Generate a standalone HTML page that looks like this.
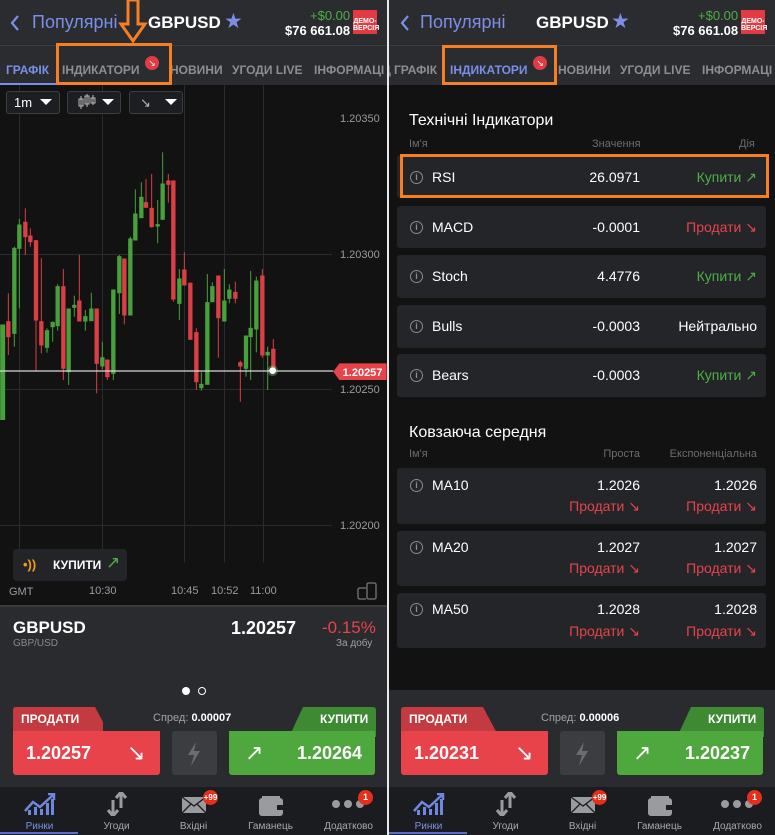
<!DOCTYPE html>
<html><head><meta charset="utf-8">
<style>
*{margin:0;padding:0;box-sizing:border-box}
body{width:775px;height:835px;background:#fff;font-family:"Liberation Sans",Arial,sans-serif;position:relative;overflow:hidden}
.p{position:absolute;top:0;height:835px;overflow:hidden;background:#121212}
.a{position:absolute;white-space:nowrap}
.hdr{position:absolute;left:0;top:0;width:100%;height:45px;background:#2b2c30}
.tabs{position:absolute;left:0;top:45px;width:100%;height:40px;background:#2b2c30;border-top:1px solid #3a3b3f}
.tab{position:absolute;top:17px;font-size:12px;font-weight:bold;color:#8d8e92}
.orange{position:absolute;border:3px solid #f47f24}
.badge{position:absolute;width:14px;height:14px;border-radius:50%;background:#e23b43;color:#fff;font-size:9px;line-height:14px;text-align:center}
.demo{position:absolute;width:24px;height:24px;background:#e23b43;color:#fff;font-size:7px;font-weight:bold;text-align:center;line-height:7px;padding-top:8px}
.row{position:absolute;left:8px;width:369px;background:#242529;border-radius:3px}
.info{position:absolute;width:13px;height:13px;border:1.5px solid #8a8b8f;border-radius:50%;color:#8a8b8f;font-size:9px;line-height:10px;text-align:center;font-weight:bold}
.w{color:#fff;font-size:14px}
.g{color:#4caf43;font-size:14px}
.r{color:#e8434a;font-size:14px}
.sm{color:#6b6c70;font-size:11px}
.bot{position:absolute;left:0;top:605px;width:100%;height:182px;background:#2a2b2f}
.nav{position:absolute;left:0;top:787px;width:100%;height:48px;background:#1b1c1f}
.navl{position:absolute;top:34px;font-size:10px;color:#a8a9ad;text-align:center;width:77px}
.ttl{position:absolute;top:13px;font-size:17px;color:#fff;font-weight:bold}
</style></head><body>

<!-- LEFT PANEL -->
<div class="p" style="left:0;width:387px">
 <div class="hdr">
  <svg class="a" style="left:9px;top:14px" width="12" height="18"><path d="M9 2 L3 9 L9 16" stroke="#7b8fe8" stroke-width="2.2" fill="none"/></svg>
  <div class="a" style="left:32px;top:12px;font-size:18px;color:#7b8fe8">Популярні</div>
  <div class="ttl" style="left:148px">GBPUSD</div>
  <div class="a" style="left:224px;top:9px;font-size:21px;color:#7b8fe8">★</div>
  <div class="a" style="left:310px;top:8px;font-size:13px;color:#4caf43">+$0.00</div>
  <div class="a" style="left:285px;top:23px;font-size:13px;color:#fff;font-weight:bold">$76 661.08</div>
  <div class="demo" style="left:353px;top:10px">ДЕМО-<br>ВЕРСІЯ</div>
 </div>
 <div class="tabs">
  <div class="tab" style="left:6px;color:#7b8fe8">ГРАФІК</div>
  <div class="tab" style="left:62px">ІНДИКАТОРИ</div>
  <div class="tab" style="left:170px">НОВИНИ</div>
  <div class="tab" style="left:232px">УГОДИ LIVE</div>
  <div class="tab" style="left:314px">ІНФОРМАЦІ</div>
  <div class="a" style="left:0;top:37px;width:57px;height:2px;background:#7b8fe8"></div>
  <div class="badge" style="left:145px;top:10px">↘</div>
 </div>
 <div class="orange" style="left:56px;top:43px;width:116px;height:42px"></div>
 <svg class="a" style="left:118px;top:0" width="30" height="44"><path d="M10 0 V24 H3 L15 41 L27 24 H20 V0 Z" fill="none" stroke="#f47f24" stroke-width="3"/></svg>

 <!-- chart -->
 <svg class="a" style="left:0;top:85px" width="387" height="520">
  <rect width="387" height="520" fill="#121212"/>
  <g stroke="#2a2b2e" stroke-width="1">
   <line x1="19.5" y1="0" x2="19.5" y2="480"/><line x1="102.5" y1="0" x2="102.5" y2="480"/>
   <line x1="184.5" y1="0" x2="184.5" y2="478"/><line x1="224.5" y1="0" x2="224.5" y2="478"/>
   <line x1="263.5" y1="0" x2="263.5" y2="478"/>
   <line x1="0" y1="169.5" x2="332" y2="169.5"/><line x1="0" y1="304.5" x2="332" y2="304.5"/><line x1="0" y1="440.5" x2="332" y2="440.5"/>
  </g>
  <g fill="#9a9b9f" font-size="11" font-family="Liberation Sans">
   <text x="340" y="37">1.20350</text><text x="340" y="173">1.20300</text>
   <text x="340" y="308">1.20250</text><text x="340" y="444">1.20200</text>
   <text x="9" y="510">GMT</text><text x="89" y="509">10:30</text><text x="171" y="509">10:45</text>
   <text x="211" y="509">10:52</text><text x="250" y="509">11:00</text>
  </g>
 </svg>
 <svg class="a" style="left:0;top:120px" width="390" height="300" viewBox="0 0 1170 900">
 <g stroke-width="3">
 <g stroke="#46a03c" fill="#46a03c">
  <line x1="8" y1="615" x2="8" y2="900"/><rect x="2" y="615" width="12" height="285"/>
  <line x1="43" y1="380" x2="43" y2="680"/><rect x="38" y="385" width="10" height="255"/>
  <line x1="58" y1="297" x2="58" y2="565"/><rect x="53" y="315" width="10" height="70"/>
  <line x1="141" y1="625" x2="141" y2="698"/><rect x="136" y="632" width="10" height="50"/>
  <line x1="158" y1="605" x2="158" y2="665"/><rect x="153" y="607" width="10" height="13"/>
  <line x1="173" y1="493" x2="173" y2="632"/><rect x="168" y="500" width="10" height="117"/>
  <line x1="206" y1="567" x2="206" y2="795"/><rect x="201" y="567" width="10" height="188"/>
  <line x1="223" y1="527" x2="223" y2="590"/><rect x="218" y="556" width="10" height="6"/>
  <line x1="256" y1="570" x2="256" y2="632"/><rect x="251" y="590" width="10" height="13"/>
  <line x1="274" y1="518" x2="274" y2="602"/><rect x="269" y="567" width="10" height="35"/>
  <line x1="307" y1="665" x2="307" y2="748"/><rect x="302" y="713" width="10" height="25"/>
  <line x1="340" y1="510" x2="340" y2="780"/><rect x="335" y="510" width="10" height="250"/>
  <line x1="358" y1="405" x2="358" y2="582"/><rect x="353" y="410" width="10" height="108"/>
  <line x1="391" y1="350" x2="391" y2="585"/><rect x="386" y="357" width="10" height="228"/>
  <line x1="406" y1="208" x2="406" y2="360"/><rect x="401" y="282" width="10" height="78"/>
  <line x1="424" y1="187" x2="424" y2="293"/><rect x="419" y="232" width="10" height="61"/>
  <line x1="473" y1="240" x2="473" y2="370"/><rect x="468" y="314" width="10" height="4"/>
  <line x1="488" y1="97" x2="488" y2="298"/><rect x="483" y="192" width="10" height="106"/>
  <line x1="538" y1="447" x2="538" y2="600"/><rect x="533" y="477" width="10" height="73"/>
  <line x1="604" y1="757" x2="604" y2="812"/><rect x="599" y="793" width="10" height="10"/>
  <line x1="622" y1="462" x2="622" y2="793"/><rect x="617" y="548" width="10" height="245"/>
  <line x1="637" y1="487" x2="637" y2="545"/><rect x="632" y="500" width="10" height="45"/>
  <line x1="673" y1="447" x2="673" y2="603"/><rect x="668" y="543" width="10" height="60"/>
  <line x1="688" y1="493" x2="688" y2="550"/><rect x="683" y="510" width="10" height="25"/>
  <line x1="738" y1="648" x2="738" y2="770"/><rect x="733" y="648" width="10" height="97"/>
  <line x1="752" y1="453" x2="752" y2="780"/><rect x="747" y="625" width="10" height="25"/>
  <line x1="769" y1="470" x2="769" y2="697"/><rect x="764" y="483" width="10" height="144"/>
  <line x1="803" y1="680" x2="803" y2="810"/><rect x="798" y="697" width="10" height="8"/>
 </g>
 <g stroke="#dc3e45" fill="#dc3e45">
  <line x1="25" y1="520" x2="25" y2="705"/><rect x="20" y="605" width="10" height="45"/>
  <line x1="76" y1="265" x2="76" y2="405"/><rect x="71" y="307" width="10" height="43"/>
  <line x1="91" y1="325" x2="91" y2="380"/><rect x="86" y="348" width="10" height="17"/>
  <line x1="108" y1="360" x2="108" y2="755"/><rect x="103" y="362" width="10" height="238"/>
  <line x1="124" y1="415" x2="124" y2="700"/><rect x="119" y="605" width="10" height="70"/>
  <line x1="190" y1="447" x2="190" y2="780"/><rect x="185" y="500" width="10" height="245"/>
  <line x1="238" y1="405" x2="238" y2="603"/><rect x="233" y="543" width="10" height="60"/>
  <line x1="290" y1="567" x2="290" y2="820"/><rect x="285" y="567" width="10" height="163"/>
  <line x1="322" y1="720" x2="322" y2="780"/><rect x="317" y="720" width="10" height="50"/>
  <line x1="373" y1="417" x2="373" y2="613"/><rect x="368" y="417" width="10" height="168"/>
  <line x1="438" y1="177" x2="438" y2="262"/><rect x="433" y="248" width="10" height="14"/>
  <line x1="455" y1="162" x2="455" y2="323"/><rect x="450" y="265" width="10" height="55"/>
  <line x1="505" y1="162" x2="505" y2="248"/><rect x="500" y="183" width="10" height="10"/>
  <line x1="520" y1="183" x2="520" y2="545"/><rect x="515" y="183" width="10" height="354"/>
  <line x1="553" y1="397" x2="553" y2="495"/><rect x="548" y="450" width="10" height="45"/>
  <line x1="571" y1="487" x2="571" y2="658"/><rect x="566" y="490" width="10" height="168"/>
  <line x1="589" y1="625" x2="589" y2="810"/><rect x="584" y="638" width="10" height="147"/>
  <line x1="655" y1="468" x2="655" y2="713"/><rect x="650" y="468" width="10" height="125"/>
  <line x1="706" y1="485" x2="706" y2="550"/><rect x="701" y="517" width="10" height="18"/>
  <line x1="721" y1="722" x2="721" y2="845"/><rect x="716" y="728" width="10" height="10"/>
  <line x1="787" y1="447" x2="787" y2="713"/><rect x="782" y="468" width="10" height="237"/>
  <line x1="820" y1="657" x2="820" y2="750"/><rect x="815" y="688" width="10" height="62"/>
 </g>
 </g>
 <line x1="0" y1="753" x2="1000" y2="753" stroke="#d8d8d8" stroke-width="4"/>
 <circle cx="818" cy="752" r="16" fill="#8fe08f" opacity="0.35"/>
 <circle cx="818" cy="752" r="10" fill="#fff"/>
 <path d="M1000 755 L1018 730 H1160 V780 H1018 Z" fill="#e8434a"/>
 <text x="1028" y="768" fill="#fff" font-size="33" font-weight="bold" font-family="Liberation Sans">1.20257</text>
 </svg>

 <!-- controls -->
 <div class="a" style="left:6px;top:91px;width:54px;height:23px;border:1px solid #3d3e42;border-radius:3px;background:#1d1e21"></div>
 <div class="a" style="left:14px;top:95px;font-size:13px;color:#fff">1m</div>
 <svg class="a" style="left:40px;top:99px" width="12" height="7"><path d="M0 0H12L6 6Z" fill="#fff"/></svg>
 <div class="a" style="left:67px;top:91px;width:54px;height:23px;border:1px solid #3d3e42;border-radius:3px;background:#1d1e21"></div>
 <svg class="a" style="left:77px;top:93px" width="20" height="18"><g stroke="#bbb" fill="none"><rect x="2" y="6" width="4" height="7"/><line x1="4" y1="3" x2="4" y2="16"/><rect x="8" y="3" width="4" height="8"/><line x1="10" y1="1" x2="10" y2="14"/><rect x="14" y="5" width="4" height="5"/><line x1="16" y1="2" x2="16" y2="12"/></g></svg>
 <svg class="a" style="left:102px;top:99px" width="12" height="7"><path d="M0 0H12L6 6Z" fill="#fff"/></svg>
 <div class="a" style="left:129px;top:91px;width:54px;height:23px;border:1px solid #3d3e42;border-radius:3px;background:#1d1e21"></div>
 <div class="a" style="left:140px;top:95px;font-size:13px;color:#bbb">↘</div>
 <svg class="a" style="left:165px;top:99px" width="12" height="7"><path d="M0 0H12L6 6Z" fill="#fff"/></svg>

 <div class="a" style="left:13px;top:549px;width:114px;height:32px;background:#232428;border-radius:4px"></div>
 <div class="a" style="left:23px;top:557px;font-size:13px;color:#f39c12;font-weight:bold">•))</div>
 <div class="a" style="left:53px;top:558px;font-size:12px;color:#fff;font-weight:bold">КУПИТИ</div>
 <div class="a" style="left:106px;top:553px;font-size:17px;color:#4caf43">↗</div>
 <svg class="a" style="left:357px;top:582px" width="22" height="18"><g stroke="#777" fill="none" stroke-width="1.3"><rect x="10" y="1" width="9" height="16" rx="1.5"/><path d="M9 6 H3 Q1 6 1 8 V15 Q1 17 3 17 H9"/></g></svg>

 <div class="bot">
  <div class="a" style="left:0;top:0;width:100%;height:2px;background:#3a3b3f"></div>
  <div class="a" style="left:13px;top:13px;font-size:17px;color:#fff;font-weight:bold">GBPUSD</div>
  <div class="a" style="left:13px;top:33px;font-size:10px;color:#8a8b8f">GBP/USD</div>
  <div class="a" style="left:231px;top:13px;font-size:18px;color:#fff;font-weight:bold">1.20257</div>
  <div class="a" style="left:322px;top:13px;font-size:17px;color:#e8434a">-0.15%</div>
  <div class="a" style="left:336px;top:33px;font-size:10px;color:#a0a1a5">За добу</div>
  <div class="a" style="left:182px;top:82px;width:8px;height:8px;border-radius:50%;background:#fff"></div>
  <div class="a" style="left:198px;top:82px;width:8px;height:8px;border-radius:50%;border:1.5px solid #fff"></div>
  <svg class="a" style="left:13px;top:102px" width="90" height="30"><path d="M3 0 H82 L98 30 H0 V3 Q0 0 3 0Z" fill="#c43a41"/></svg>
  <div class="a" style="left:21px;top:107px;font-size:12px;color:#fff;font-weight:bold">ПРОДАТИ</div>
  <div class="a" style="left:153px;top:107px;font-size:11px;color:#a0a1a5">Спред: <b style="color:#fff">0.00007</b></div>
  <svg class="a" style="left:289px;top:102px" width="87" height="30"><path d="M14 0 H84 Q87 0 87 3 V30 H0Z" fill="#3d8a33"/></svg>
  <div class="a" style="left:320px;top:107px;font-size:12px;color:#fff;font-weight:bold">КУПИТИ</div>
  <div class="a" style="left:13px;top:126px;width:147px;height:44px;background:#e8434a;border-radius:0 0 3px 3px"></div>
  <div class="a" style="left:26px;top:138px;font-size:18px;color:#fff;font-weight:bold">1.20257</div>
  <div class="a" style="left:127px;top:135px;font-size:22px;color:#fff">↘</div>
  <div class="a" style="left:172px;top:126px;width:45px;height:44px;background:#3c3d41;border-radius:3px"></div>
  <svg class="a" style="left:185px;top:137px" width="18" height="24"><path d="M11 0 L3 13 H9 L6 24 L15 9 H9 Z" fill="#6b6c70"/></svg>
  <div class="a" style="left:229px;top:126px;width:146px;height:44px;background:#4fa83d;border-radius:0 0 3px 3px"></div>
  <div class="a" style="left:245px;top:135px;font-size:22px;color:#fff">↗</div>
  <div class="a" style="left:297px;top:138px;font-size:18px;color:#fff;font-weight:bold">1.20264</div>
 </div>
 <div class="nav">
  <svg class="a" style="left:24px;top:6px" width="32" height="22"><path d="M1 18 L9 9 L16 14 L29 2" stroke="#6f87df" stroke-width="2.5" fill="none"/><path d="M24 1 H30 V7" stroke="#6f87df" stroke-width="2.5" fill="none"/><g fill="#6f87df"><rect x="4" y="17" width="3" height="5"/><rect x="10" y="14" width="3" height="8"/><rect x="16" y="16" width="3" height="6"/><rect x="22" y="10" width="3" height="12"/><rect x="27" y="6" width="3" height="16"/></g></svg>
  <div class="navl" style="left:1px;color:#7b8fe8">Ринки</div>
  <div class="a" style="left:0;top:45px;width:78px;height:2px;background:#5570d0"></div>
  <svg class="a" style="left:106px;top:5px" width="22" height="24"><path d="M7 24 V8 M2 18 L7 24 L12 18 M15 0 L10 6 M15 0 L20 6 M15 0 V16" stroke="#9a9b9f" stroke-width="3" fill="none"/></svg>
  <div class="navl" style="left:78px">Угоди</div>
  <svg class="a" style="left:181px;top:9px" width="26" height="18"><rect x="1" y="1" width="24" height="16" fill="#9a9b9f"/><path d="M1 1 L13 10 L25 1 M1 17 L10 8 M25 17 L16 8" stroke="#1b1c1f" stroke-width="1.3" fill="none"/></svg>
  <div class="badge" style="left:203px;top:3px;width:15px;height:15px;font-size:8px;line-height:15px;background:#e62f1a;font-weight:bold">+99</div>
  <div class="navl" style="left:155px">Вхідні</div>
  <svg class="a" style="left:258px;top:8px" width="26" height="22"><rect x="1" y="3" width="24" height="18" rx="3" fill="#9a9b9f"/><rect x="4" y="1" width="18" height="4" fill="#9a9b9f"/><rect x="19" y="10" width="6" height="5" fill="#1b1c1f"/></svg>
  <div class="navl" style="left:232px">Гаманець</div>
  <div class="a" style="left:332px;top:13px;width:8px;height:8px;border-radius:50%;background:#9a9b9f;box-shadow:12px 0 #9a9b9f,24px 0 #9a9b9f"></div>
  <div class="badge" style="left:358px;top:3px;width:15px;height:15px;line-height:15px;background:#e62f1a;font-weight:bold">1</div>
  <div class="navl" style="left:310px">Додатково</div>
 </div>
</div>

<div class="a" style="left:387px;top:0;width:2px;height:835px;background:#e8e8e8"></div>

<!-- RIGHT PANEL -->
<div class="p" style="left:389px;width:386px">
 <div class="hdr">
  <svg class="a" style="left:10px;top:14px" width="12" height="18"><path d="M9 2 L3 9 L9 16" stroke="#7b8fe8" stroke-width="2.2" fill="none"/></svg>
  <div class="a" style="left:31px;top:12px;font-size:18px;color:#7b8fe8">Популярні</div>
  <div class="ttl" style="left:147px">GBPUSD</div>
  <div class="a" style="left:222px;top:9px;font-size:21px;color:#7b8fe8">★</div>
  <div class="a" style="left:309px;top:8px;font-size:13px;color:#4caf43">+$0.00</div>
  <div class="a" style="left:284px;top:23px;font-size:13px;color:#fff;font-weight:bold">$76 661.08</div>
  <div class="demo" style="left:352px;top:10px">ДЕМО-<br>ВЕРСІЯ</div>
 </div>
 <div class="tabs">
  <div class="tab" style="left:-7px">Ц</div>
  <div class="tab" style="left:5px">ГРАФІК</div>
  <div class="tab" style="left:61px;color:#7b8fe8">ІНДИКАТОРИ</div>
  <div class="tab" style="left:169px">НОВИНИ</div>
  <div class="tab" style="left:231px">УГОДИ LIVE</div>
  <div class="tab" style="left:313px">ІНФОРМАЦІ</div>
  <div class="badge" style="left:144px;top:10px">↘</div>
 </div>
 <div class="orange" style="left:53px;top:45px;width:115px;height:40px"></div>

 <div class="a" style="left:20px;top:112px;font-size:16px;color:#fff">Технічні Індикатори</div>
 <div class="a sm" style="left:20px;top:138px">Ім'я</div>
 <div class="a sm" style="left:203px;top:138px">Значення</div>
 <div class="a sm" style="left:350px;top:138px">Дія</div>

 <div class="row" style="top:155px;height:43px"></div>
 <div class="orange" style="left:11px;top:154px;width:369px;height:44px"></div>
 <div class="row" style="top:206px;height:42px"></div>
 <div class="row" style="top:255px;height:43px"></div>
 <div class="row" style="top:305px;height:43px"></div>
 <div class="row" style="top:354px;height:43px"></div>

 <div class="info" style="left:21px;top:171px">i</div><div class="a w" style="left:43px;top:169px">RSI</div><div class="a w" style="right:135px;top:169px">26.0971</div><div class="a g" style="right:18px;top:169px">Купити ↗</div>
 <div class="info" style="left:21px;top:221px">i</div><div class="a w" style="left:43px;top:219px">MACD</div><div class="a w" style="right:135px;top:219px">-0.0001</div><div class="a r" style="right:18px;top:219px">Продати ↘</div>
 <div class="info" style="left:21px;top:270px">i</div><div class="a w" style="left:43px;top:268px">Stoch</div><div class="a w" style="right:135px;top:268px">4.4776</div><div class="a g" style="right:18px;top:268px">Купити ↗</div>
 <div class="info" style="left:21px;top:320px">i</div><div class="a w" style="left:43px;top:318px">Bulls</div><div class="a w" style="right:135px;top:318px">-0.0003</div><div class="a w" style="right:18px;top:318px">Нейтрально</div>
 <div class="info" style="left:21px;top:369px">i</div><div class="a w" style="left:43px;top:367px">Bears</div><div class="a w" style="right:135px;top:367px">-0.0003</div><div class="a g" style="right:18px;top:367px">Купити ↗</div>

 <div class="a" style="left:20px;top:424px;font-size:16px;color:#fff">Ковзаюча середня</div>
 <div class="a sm" style="left:20px;top:448px">Ім'я</div>
 <div class="a sm" style="right:135px;top:448px">Проста</div>
 <div class="a sm" style="right:18px;top:448px">Експоненціальна</div>

 <div class="row" style="top:468px;height:56px"></div>
 <div class="row" style="top:531px;height:55px"></div>
 <div class="row" style="top:593px;height:55px"></div>
 <div class="info" style="left:21px;top:479px">i</div><div class="a w" style="left:43px;top:477px">MA10</div><div class="a w" style="right:135px;top:477px">1.2026</div><div class="a w" style="right:18px;top:477px">1.2026</div><div class="a r" style="right:135px;top:498px">Продати ↘</div><div class="a r" style="right:18px;top:498px">Продати ↘</div>
 <div class="info" style="left:21px;top:541px">i</div><div class="a w" style="left:43px;top:539px">MA20</div><div class="a w" style="right:135px;top:539px">1.2027</div><div class="a w" style="right:18px;top:539px">1.2027</div><div class="a r" style="right:135px;top:560px">Продати ↘</div><div class="a r" style="right:18px;top:560px">Продати ↘</div>
 <div class="info" style="left:21px;top:603px">i</div><div class="a w" style="left:43px;top:601px">MA50</div><div class="a w" style="right:135px;top:601px">1.2028</div><div class="a w" style="right:18px;top:601px">1.2028</div><div class="a r" style="right:135px;top:623px">Продати ↘</div><div class="a r" style="right:18px;top:623px">Продати ↘</div>

 <div class="bot" style="top:690px;height:97px">
  <svg class="a" style="left:12px;top:17px" width="100" height="30"><path d="M3 0 H82 L98 30 H0 V3 Q0 0 3 0Z" fill="#c43a41"/></svg>
  <div class="a" style="left:20px;top:22px;font-size:12px;color:#fff;font-weight:bold">ПРОДАТИ</div>
  <div class="a" style="left:152px;top:22px;font-size:11px;color:#a0a1a5">Спред: <b style="color:#fff">0.00006</b></div>
  <svg class="a" style="left:288px;top:17px" width="87" height="30"><path d="M14 0 H84 Q87 0 87 3 V30 H0Z" fill="#3d8a33"/></svg>
  <div class="a" style="left:319px;top:22px;font-size:12px;color:#fff;font-weight:bold">КУПИТИ</div>
  <div class="a" style="left:12px;top:41px;width:147px;height:44px;background:#e8434a;border-radius:0 0 3px 3px"></div>
  <div class="a" style="left:25px;top:53px;font-size:18px;color:#fff;font-weight:bold">1.20231</div>
  <div class="a" style="left:126px;top:50px;font-size:22px;color:#fff">↘</div>
  <div class="a" style="left:171px;top:41px;width:45px;height:44px;background:#3c3d41;border-radius:3px"></div>
  <svg class="a" style="left:184px;top:52px" width="18" height="24"><path d="M11 0 L3 13 H9 L6 24 L15 9 H9 Z" fill="#6b6c70"/></svg>
  <div class="a" style="left:228px;top:41px;width:146px;height:44px;background:#4fa83d;border-radius:0 0 3px 3px"></div>
  <div class="a" style="left:244px;top:50px;font-size:22px;color:#fff">↗</div>
  <div class="a" style="left:296px;top:53px;font-size:18px;color:#fff;font-weight:bold">1.20237</div>
 </div>
 <div class="nav">
  <svg class="a" style="left:24px;top:6px" width="32" height="22"><path d="M1 18 L9 9 L16 14 L29 2" stroke="#6f87df" stroke-width="2.5" fill="none"/><path d="M24 1 H30 V7" stroke="#6f87df" stroke-width="2.5" fill="none"/><g fill="#6f87df"><rect x="4" y="17" width="3" height="5"/><rect x="10" y="14" width="3" height="8"/><rect x="16" y="16" width="3" height="6"/><rect x="22" y="10" width="3" height="12"/><rect x="27" y="6" width="3" height="16"/></g></svg>
  <div class="navl" style="left:1px;color:#7b8fe8">Ринки</div>
  <div class="a" style="left:0;top:45px;width:78px;height:2px;background:#5570d0"></div>
  <svg class="a" style="left:106px;top:5px" width="22" height="24"><path d="M7 24 V8 M2 18 L7 24 L12 18 M15 0 L10 6 M15 0 L20 6 M15 0 V16" stroke="#9a9b9f" stroke-width="3" fill="none"/></svg>
  <div class="navl" style="left:78px">Угоди</div>
  <svg class="a" style="left:181px;top:9px" width="26" height="18"><rect x="1" y="1" width="24" height="16" fill="#9a9b9f"/><path d="M1 1 L13 10 L25 1 M1 17 L10 8 M25 17 L16 8" stroke="#1b1c1f" stroke-width="1.3" fill="none"/></svg>
  <div class="badge" style="left:203px;top:3px;width:15px;height:15px;font-size:8px;line-height:15px;background:#e62f1a;font-weight:bold">+99</div>
  <div class="navl" style="left:155px">Вхідні</div>
  <svg class="a" style="left:258px;top:8px" width="26" height="22"><rect x="1" y="3" width="24" height="18" rx="3" fill="#9a9b9f"/><rect x="4" y="1" width="18" height="4" fill="#9a9b9f"/><rect x="19" y="10" width="6" height="5" fill="#1b1c1f"/></svg>
  <div class="navl" style="left:232px">Гаманець</div>
  <div class="a" style="left:332px;top:13px;width:8px;height:8px;border-radius:50%;background:#9a9b9f;box-shadow:12px 0 #9a9b9f,24px 0 #9a9b9f"></div>
  <div class="badge" style="left:358px;top:3px;width:15px;height:15px;line-height:15px;background:#e62f1a;font-weight:bold">1</div>
  <div class="navl" style="left:310px">Додатково</div>
 </div>
</div>
</body></html>
